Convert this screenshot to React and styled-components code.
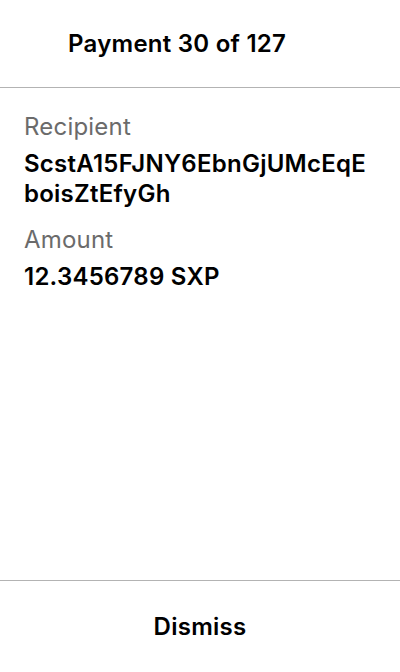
import React from "react";
import styled, { createGlobalStyle } from "styled-components";

const Global = createGlobalStyle`
  html, body { margin: 0; padding: 0; background: #fff; }
  body { font-family: Inter, "Noto Sans", sans-serif; color: #000; -webkit-font-smoothing: antialiased; }
  #root { height: 672px; }
`;

const Screen = styled.div`
  width: 400px;
  height: 672px;
  display: flex;
  flex-direction: column;
  background: #fff;
`;

const Header = styled.header`
  height: 87px;
  display: flex;
  align-items: center;
  padding-left: 68px;
  border-bottom: 1px solid #b3b3b3;
  box-sizing: content-box;
  flex-shrink: 0;
`;

const Title = styled.h1`
  margin: 0;
  font-size: 24px;
  line-height: 30px;
  font-weight: 600;
  letter-spacing: 0.25px;
`;

const Body = styled.main`
  flex: 1;
  padding: 24px 24px 0;
  display: flex;
  flex-direction: column;
`;

const Label = styled.div`
  font-size: 24px;
  line-height: 30px;
  color: #6b6b6b;
  letter-spacing: 0.2px;
  margin-top: ${(p) => (p.$first ? "0" : "16px")};
`;

const Value = styled.div`
  font-size: 24px;
  line-height: 30px;
  font-weight: 600;
  letter-spacing: 0.25px;
  margin-top: 7px;
`;

const Footer = styled.footer`
  height: 91px;
  border-top: 1px solid #b3b3b3;
  display: flex;
  align-items: center;
  justify-content: center;
  flex-shrink: 0;
`;

const DismissButton = styled.button`
  border: none;
  background: none;
  font-family: inherit;
  font-size: 24px;
  line-height: 30px;
  font-weight: 600;
  letter-spacing: 0.25px;
  color: #000;
  padding: 0;
  cursor: pointer;
`;

export default function App() {
  return (
    <>
      <Global />
      <Screen>
        <Header>
          <Title>Payment 30 of 127</Title>
        </Header>
        <Body>
          <Label $first>Recipient</Label>
          <Value>
            ScstA15FJNY6EbnGjUMcEqE
            <br />
            boisZtEfyGh
          </Value>
          <Label>Amount</Label>
          <Value>12.3456789 SXP</Value>
        </Body>
        <Footer>
          <DismissButton>Dismiss</DismissButton>
        </Footer>
      </Screen>
    </>
  );
}
